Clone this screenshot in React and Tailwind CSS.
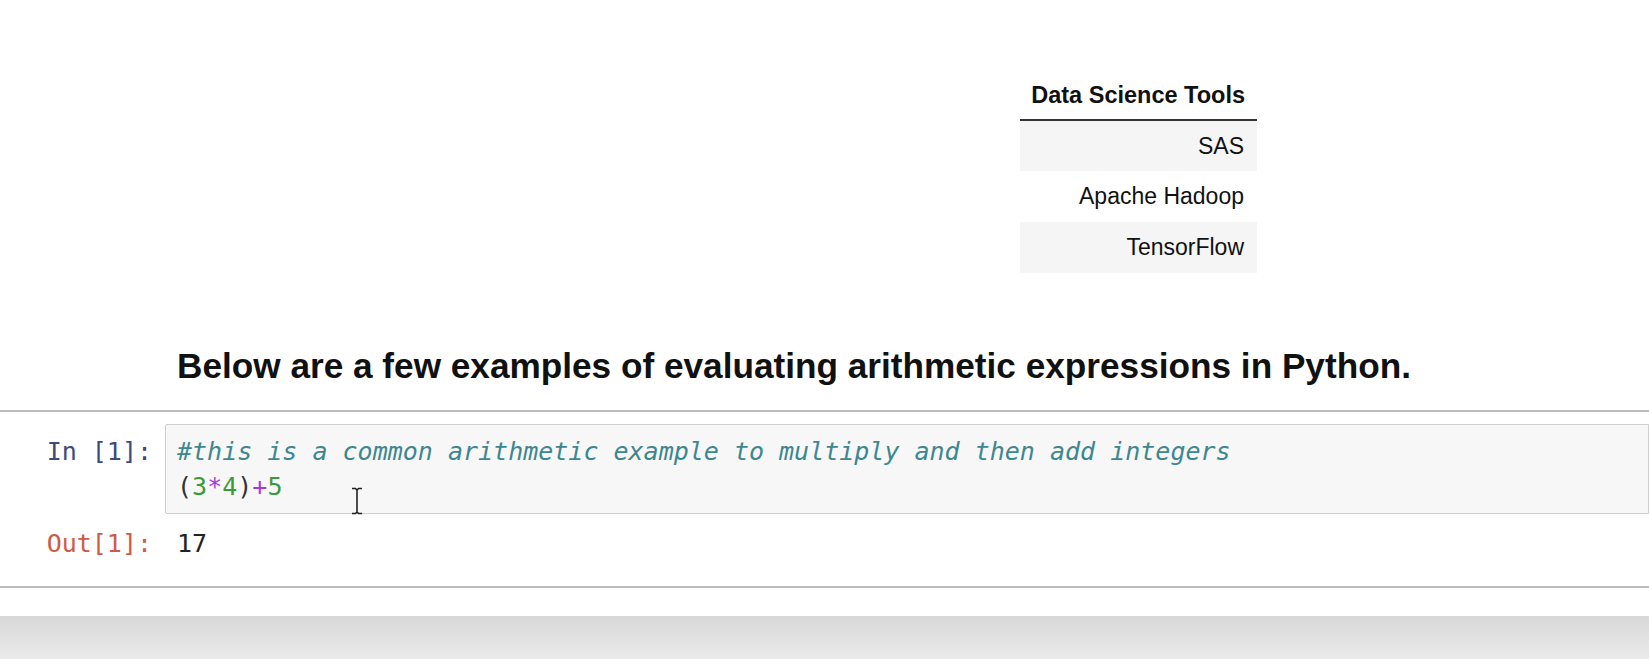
import React from 'react';

const tools = ['SAS', 'Apache Hadoop', 'TensorFlow'];

function IBeam() {
  return (
    <svg width="14" height="28" viewBox="0 0 14 28" className="absolute left-[350px] top-[487px]">
      <path d="M2 1.5h3.5L7 3l1.5-1.5H12M7 3v22M2 26.5h3.5L7 25l1.5 1.5H12" fill="none" stroke="#222" strokeWidth="1.6" />
    </svg>
  );
}

export default function App() {
  return (
    <div className="relative h-[659px] w-full overflow-hidden bg-white flex flex-col">
      <div className="pt-[73px] pl-[1020px]">
        <table className="w-[237px] border-collapse text-[23px] text-[#111]" style={{ fontFamily: '"Liberation Sans", Arial, sans-serif' }}>
          <thead>
            <tr>
              <th className="h-[47px] pr-[12px] text-right text-[23.5px] font-bold border-b-2 border-[#333] leading-none">Data Science Tools</th>
            </tr>
          </thead>
          <tbody>
            {tools.map((t, i) => (
              <tr key={t} className={i % 2 === 0 ? 'bg-[#f5f5f5]' : 'bg-white'}>
                <td className="h-[51px] pr-[13px] text-right leading-none">{t}</td>
              </tr>
            ))}
          </tbody>
        </table>
      </div>

      <h3
        className="mt-[73px] pl-[177px] text-[35.2px] font-bold leading-[40px] text-[#111]"
        style={{ fontFamily: '"Liberation Sans", Arial, sans-serif' }}
      >
        Below are a few examples of evaluating arithmetic expressions in Python.
      </h3>

      <div
        className="mt-[24px] border-y-2 border-[#bdbdbd] pt-[12px] pb-[25px] text-[25px]"
        style={{ fontFamily: '"DejaVu Sans Mono", monospace' }}
      >
        <div className="flex">
          <div className="w-[165px] pr-[13px] pt-[10px] text-right leading-[35px] text-[#3f4a7c]">In [1]:</div>
          <div className="flex-1 bg-[#f7f7f7] border border-[#cfcfcf] rounded-l-[2px] pl-[11px] py-[9px] leading-[35px]">
            <div className="italic text-[#3d8790]">#this is a common arithmetic example to multiply and then add integers</div>
            <div>
              <span className="text-[#333]">(</span>
              <span className="text-[#3a9a3a]">3</span>
              <span className="text-[#a23be0]">*</span>
              <span className="text-[#3a9a3a]">4</span>
              <span className="text-[#333]">)</span>
              <span className="text-[#a23be0]">+</span>
              <span className="text-[#3a9a3a]">5</span>
            </div>
          </div>
        </div>
        <div className="flex mt-[12px]">
          <div className="w-[165px] pr-[13px] text-right leading-[35px] text-[#cf5a45]">Out[1]:</div>
          <div className="pl-[12px] leading-[35px] text-[#222]">17</div>
        </div>
      </div>

      <div className="h-[28px] bg-white" />
      <div className="flex-1 bg-gradient-to-b from-[#d8d8d8] to-[#ebebeb]" />

      <IBeam />
    </div>
  );
}
